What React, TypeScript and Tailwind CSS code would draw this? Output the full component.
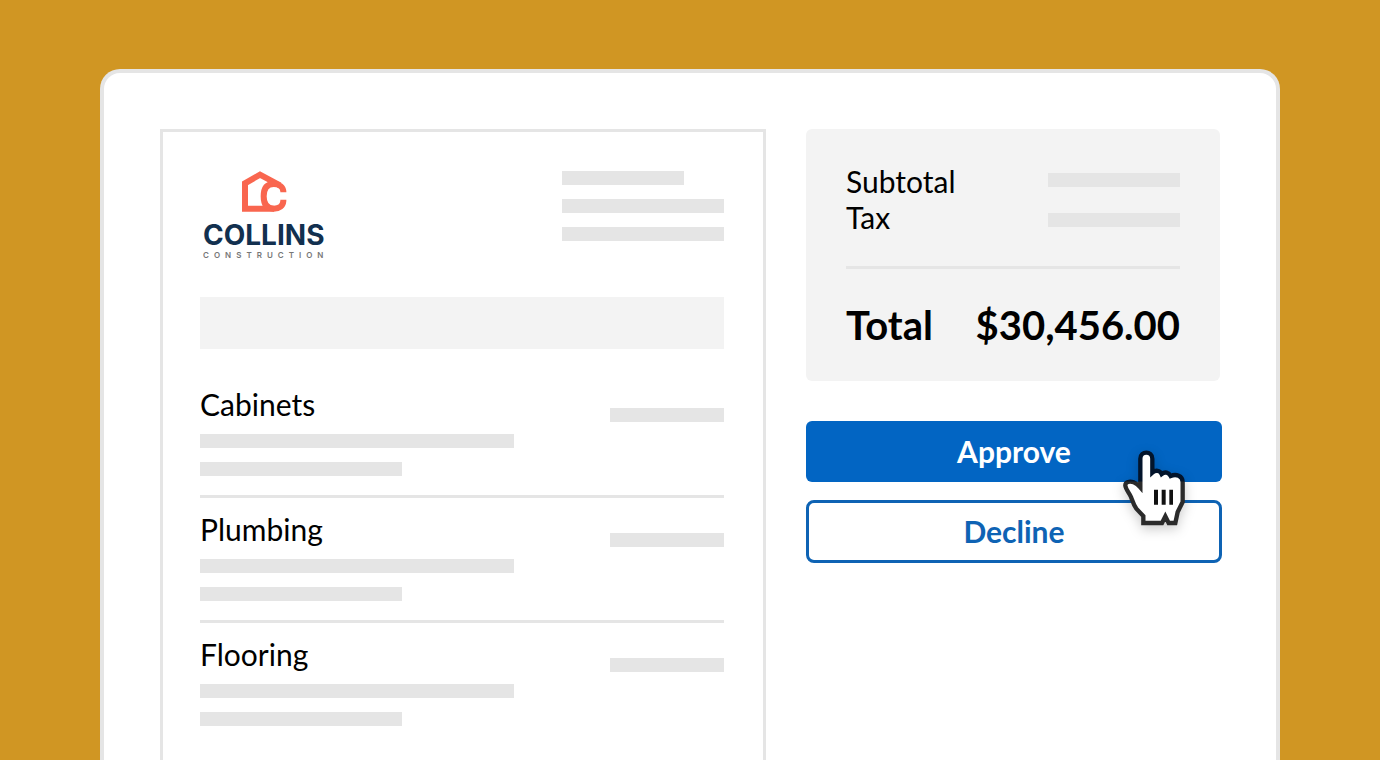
const lineItems = [
  { id: 'cabinets', name: 'Cabinets' },
  { id: 'plumbing', name: 'Plumbing' },
  { id: 'flooring', name: 'Flooring' },
];

function Bar({ className }: { className: string }) {
  return <div className={`h-3.5 bg-[#e5e5e5] ${className}`} />;
}

function Logo() {
  return (
    <div className="flex flex-col items-center pl-[3px]">
      <svg className="ml-0.5 h-[41px] w-[45px]" viewBox="142 34 135 123" aria-hidden="true">
        <path
          d="M256 77 L196 45 L151 71 V147 H238"
          fill="none"
          stroke="#f9664f"
          strokeWidth="18"
        />
        <path
          d="M266 98 V95 C265 82 254 73 237 73 C217 73 207 86 207 110 C207 134 217 147 237 147 C254 147 265 138 266 124 V120"
          fill="none"
          stroke="#f9664f"
          strokeWidth="18"
        />
      </svg>
      <div className="mt-[11px] font-['Inter',sans-serif] text-[28px] leading-6 font-bold text-[#12304f]">
        COLLINS
      </div>
      <div className="mt-0.5 -mr-1 font-['Inter',sans-serif] text-[8px] leading-3 font-semibold tracking-[5px] text-[#777]">
        CONSTRUCTION
      </div>
    </div>
  );
}

function LineItem({ name }: { name: string }) {
  return (
    <li className="border-b-[3px] border-[#e5e5e5] pt-[13px] pb-[19px] last:border-b-0">
      <div className="flex items-end justify-between">
        <h2 className="text-[30px] leading-9">{name}</h2>
        <Bar className="w-[114px]" />
      </div>
      <Bar className="mt-3 w-3/5" />
      <Bar className="mt-3.5 w-[202px]" />
    </li>
  );
}

function Estimate() {
  return (
    <section className="border-[3px] border-b-0 border-[#e5e5e5] pt-[39px] pr-[39px] pl-[37px]">
      <header className="flex items-start justify-between">
        <Logo />
        <div className="flex w-[162px] flex-col gap-3.5">
          <Bar className="w-3/4" />
          <Bar className="w-full" />
          <Bar className="w-full" />
        </div>
      </header>
      <div className="mt-9 h-[52px] bg-[#f3f3f3]" />
      <ul className="mt-6">
        {lineItems.map((item) => (
          <LineItem key={item.id} name={item.name} />
        ))}
      </ul>
    </section>
  );
}

function Summary() {
  return (
    <div className="mr-0.5 rounded-md bg-[#f3f3f3] px-10 pt-[34px] pb-8">
      <div className="flex justify-between text-[30px] leading-9">
        <div>
          <p>Subtotal</p>
          <p>Tax</p>
        </div>
        <div className="flex w-[132px] flex-col gap-[26px] pt-2.5">
          <Bar className="w-full" />
          <Bar className="w-full" />
        </div>
      </div>
      <hr className="mt-[31px] border-t-[3px] border-[#e5e5e5]" />
      <div className="mt-8 flex justify-between text-[40px] leading-[48px] font-bold">
        <span>Total</span>
        <span>$30,456.00</span>
      </div>
    </div>
  );
}

function HandCursor() {
  return (
    <svg
      className="pointer-events-none absolute top-[29px] right-9 h-[76px] w-[63px] overflow-visible drop-shadow-[0_4px_6px_rgba(0,0,0,0.2)]"
      viewBox="40 30 189 228"
      aria-hidden="true"
    >
      <defs>
        <linearGradient id="outline" gradientUnits="userSpaceOnUse" x1="0" y1="30" x2="0" y2="258">
          <stop offset="0.41" stopColor="#02142b" />
          <stop offset="0.42" stopColor="#2b2b2b" />
        </linearGradient>
      </defs>
      <path
        d="M101 249 V228 L80 206 C72 196 69 184 64 171 C59 159 48 148 47 137 C46 125 61 123 72 127 C80 130 86 135 92 142 V56 C92 32 128 32 128 56 V98 C138 89 151 91 156 102 C166 94 177 97 183 108 C199 101 219 107 219 126 V186 L204 216 L197 249 H177 L167 229 L157 249 Z"
        fill="#fff"
        stroke="url(#outline)"
        strokeWidth="13"
      />
      <path d="M133 149h12v45h-12zM156 149h12v45h-12zM179 149h11v45h-11z" fill="#111" />
    </svg>
  );
}

function Actions() {
  return (
    <div className="relative mt-10 flex flex-col gap-[18px] text-[30px] leading-9 font-bold">
      <button type="button" className="h-[61px] rounded-md bg-[#0265c3] pb-0.5 text-white">
        Approve
      </button>
      <button
        type="button"
        className="h-[63px] rounded-lg border-[3px] border-[#0e63b4] bg-white pb-0.5 text-[#0e63b4]"
      >
        Decline
      </button>
      <HandCursor />
    </div>
  );
}

export default function App() {
  return (
    <div className="flex h-screen flex-col overflow-hidden bg-[#d09623] px-[100px] pt-[69px] font-['Lato',sans-serif] text-black">
      <main className="grid min-h-0 flex-1 grid-cols-[606fr_416fr] gap-10 rounded-t-[20px] border-4 border-b-0 border-[#e5e5e5] bg-white pt-14 pr-[54px] pl-14">
        <Estimate />
        <aside>
          <Summary />
          <Actions />
        </aside>
      </main>
    </div>
  );
}
